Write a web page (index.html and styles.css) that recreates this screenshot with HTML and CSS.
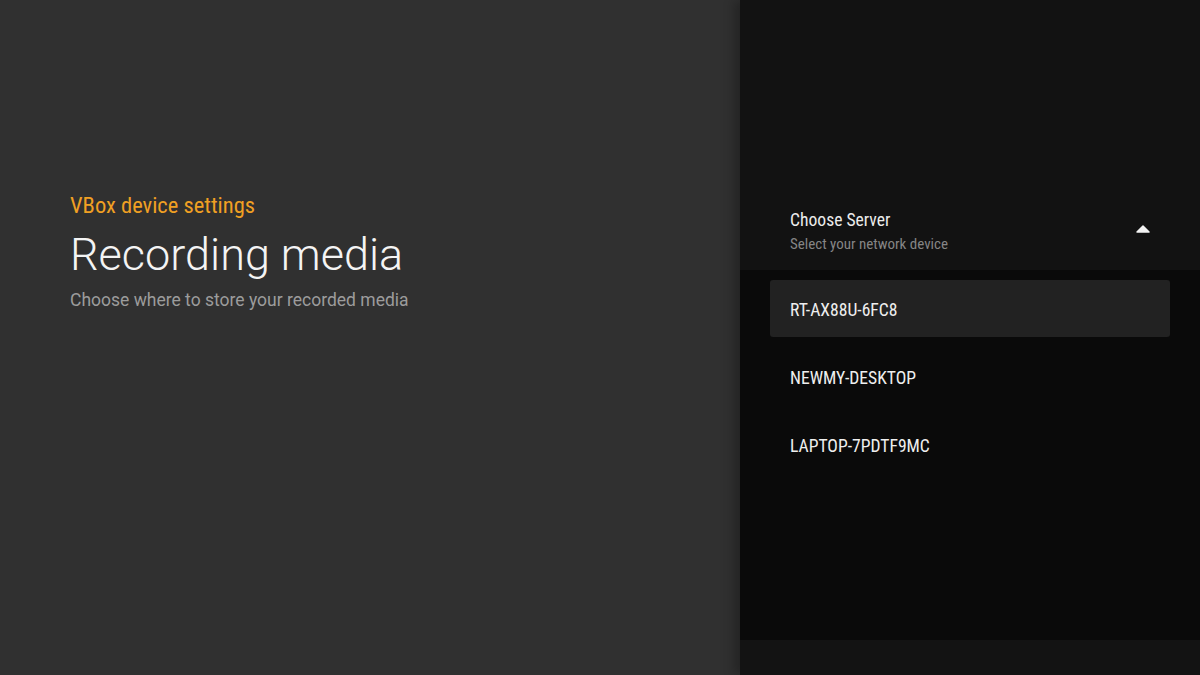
FILE: index.html
```html
<!DOCTYPE html>
<html lang="en">

<head>
  <meta charset="UTF-8" />
  <meta name="viewport" content="width=device-width, initial-scale=1.0" />
  <title>VBox device settings</title>
  <link rel="stylesheet" href="styles.css">
</head>

<body>
  <div class="screen">
    <div class="intro">
      <div class="breadcrumb">VBox device settings</div>
      <h1 class="title">Recording media</h1>
      <div class="description">Choose where to store your recorded media</div>
    </div>
    <div class="panel">
      <div class="panel-head">
        <div class="panel-text">
          <div class="panel-title">Choose Server</div>
          <div class="panel-subtitle">Select your network device</div>
        </div>
        <svg class="caret" width="14" height="9" viewBox="0 0 14 9">
          <path d="M1 8 L7 2 L13 8 Z" fill="#f2f2f2" stroke="#f2f2f2" stroke-width="1.5" stroke-linejoin="round" />
        </svg>
      </div>
      <div class="options">
        <div class="option selected">RT-AX88U-6FC8</div>
        <div class="option">NEWMY-DESKTOP</div>
        <div class="option">LAPTOP-7PDTF9MC</div>
      </div>
      <div class="panel-foot"></div>
    </div>
  </div>
</body>

</html>
```

FILE: styles.css
```css
* {
  box-sizing: border-box;
}

html,
body {
  height: 100%;
  margin: 0;
}

body {
  background: #303030;
  font-family: Roboto, "Liberation Sans", sans-serif;
}

.screen {
  display: flex;
  height: 100%;
}

.intro {
  flex: 1;
  background: #303030;
  padding: 192px 0 0 70px;
}

.breadcrumb {
  color: #f0a023;
  font-size: 22.5px;
  line-height: 26px;
  font-stretch: condensed;
}

.title {
  margin: 10px 0 0;
  color: #f4f4f4;
  font-size: 45px;
  font-weight: 300;
  line-height: 54px;
}

.description {
  margin-top: 6px;
  color: #9c9c9c;
  font-size: 17.5px;
  line-height: 24px;
}

.panel {
  width: 460px;
  display: flex;
  flex-direction: column;
  box-shadow: -6px 0 10px rgba(0, 0, 0, 0.25);
  font-stretch: condensed;
}

.panel-head {
  height: 270px;
  background: #121212;
  padding: 209px 50px 0 50px;
  display: flex;
  justify-content: space-between;
  align-items: flex-start;
}

.panel-title {
  color: #ececec;
  font-size: 17.6px;
  line-height: 22px;
}

.panel-subtitle {
  margin-top: 3px;
  color: #858585;
  font-size: 15px;
  line-height: 20px;
}

.caret {
  margin-top: 15px;
}

.options {
  flex: 1;
  background: #0a0a0a;
  padding: 10px 30px;
  display: flex;
  flex-direction: column;
  gap: 11px;
}

.option {
  height: 57px;
  padding: 2px 0 0 20px;
  border-radius: 3px;
  display: flex;
  align-items: center;
  color: #efefef;
  font-size: 17.6px;
}

.option.selected {
  background: #222222;
}

.panel-foot {
  height: 35px;
  background: #131313;
}
```
